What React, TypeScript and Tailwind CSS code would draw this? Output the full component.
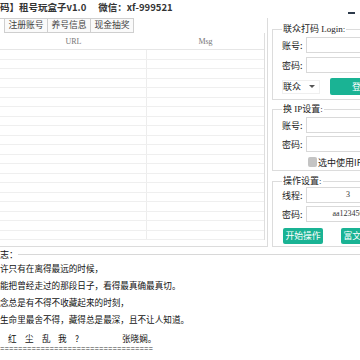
import React from "react";

const serif = "font-['Liberation_Serif','Noto_Sans_CJK_SC',serif]";

function Input({ value }: { value?: string }) {
  return (
    <div className={`w-[84px] h-[16px] border border-[#d9d9d9] bg-white flex items-center justify-center text-[8px] text-[#333] ${serif}`}>
      {value}
    </div>
  );
}

function Row({ label, value, mt }: { label: string; value?: string; mt: string }) {
  return (
    <div className={`flex items-center h-[16px] ${mt}`}>
      <span className="w-[24px] text-[9px] text-[#222] whitespace-nowrap">{label}</span>
      <Input value={value} />
    </div>
  );
}

export default function App() {
  const rows = Array.from({ length: 20 });
  return (
    <div className="w-[360px] h-[360px] overflow-hidden bg-white text-[#222] font-['Noto_Sans_CJK_SC',sans-serif] text-[9px] leading-none flex flex-col">
      {/* title bar */}
      <div className="h-[18px] shrink-0 flex items-start">
        <div className="pt-[2px] h-[13px] leading-[11px] font-bold text-[9.5px] text-[#333] whitespace-nowrap">码】租号玩盒子v1.0</div>
        <div className="ml-[12px] pt-[2px] h-[13px] leading-[11px] font-bold text-[9.5px] text-[#333] whitespace-nowrap">微信：xf-999521</div>
        <div className="ml-auto mr-[5px] mt-[11.5px] w-[7px] h-[2px] bg-[#2d3a4b]" />
      </div>

      {/* body */}
      <div className="h-[229px] shrink-0 flex">
        {/* left panel */}
        <div className="w-[268px] shrink-0 flex flex-col border-r border-b border-[#dcdcdc]">
          <div className="h-[15px] shrink-0 flex">
            <div className="w-[5px] h-full border-r border-t border-[#cfcfcf] bg-white" />
            {["注册账号", "养号信息", "现金抽奖"].map((t) => (
              <div key={t} className="w-[43px] h-full border-r border-t border-b border-[#cfcfcf] bg-[#fafafa] flex items-center justify-center text-[8.8px] text-[#444] whitespace-nowrap">
                {t}
              </div>
            ))}
          </div>
          <div className="mr-[2px] h-[207px] border-r border-b border-[#dedede] flex flex-col bg-white">
            <div className={`h-[17px] shrink-0 flex items-center border-b border-[#e6e6e6] text-[8px] text-[#777] ${serif}`}>
              <div className="w-[147px] text-center pt-[2px]">URL</div>
              <div className="flex-1 text-center pt-[2px]">Msg</div>
            </div>
            {rows.map((_, i) => (
              <div key={i} className="h-[9.5px] shrink-0 flex border-b-[1.5px] border-[#efefef]">
                <div className="w-[147px] border-r-[1.5px] border-[#ededed]" />
                <div className="flex-1" />
              </div>
            ))}
          </div>
        </div>

        {/* right column */}
        <div className="ml-[4px] flex-1 overflow-hidden flex flex-col">
          <fieldset className="mt-[6px] w-[120px] border border-[#dcdcdc] pl-[9px] pb-[4px]">
            <legend className={`px-[1px] h-[11px] leading-[11px] text-[9px] text-[#222] whitespace-nowrap ${serif}`}>联众打码 Login:</legend>
            <Row label="账号:" mt="mt-[2px]" />
            <Row label="密码:" mt="mt-[4px]" />
            <div className="mt-[5px] h-[17px] flex items-center">
              <div className="w-[38px] h-[14px] flex items-center justify-between border border-[#efefef] bg-white">
                <span className="text-[9px]">联众</span>
                <span className="mr-[4px] w-0 h-0 border-l-[3px] border-r-[3px] border-t-[3px] border-l-transparent border-r-transparent border-t-[#555]" />
              </div>
              <div className="ml-[10px] w-[62px] h-[17px] rounded-[2px] bg-[#1ab394] text-white flex items-center justify-center text-[9px] whitespace-nowrap">
                登录
              </div>
            </div>
          </fieldset>

          <fieldset className="mt-[4px] w-[120px] border border-[#dcdcdc] pl-[9px] pb-[3px]">
            <legend className={`px-[1px] h-[11px] leading-[11px] text-[9px] text-[#222] whitespace-nowrap ${serif}`}>换 IP设置:</legend>
            <Row label="账号:" mt="mt-[2px]" />
            <Row label="密码:" mt="mt-[3px]" />
            <div className="mt-[5px] h-[10px] flex items-center">
              <div className="ml-[26px] w-[9px] h-[10px] rounded-[2px] bg-[#c4c4c4]" />
              <span className="ml-[1px] text-[9px] whitespace-nowrap">选中使用IP</span>
            </div>
          </fieldset>

          <fieldset className="mt-[5px] w-[120px] border border-[#dcdcdc] pl-[9px] pb-[2px]">
            <legend className={`px-[1px] h-[11px] leading-[11px] text-[9px] text-[#222] whitespace-nowrap ${serif}`}>操作设置:</legend>
            <Row label="线程:" value="3" mt="mt-0" />
            <Row label="密码:" value="aa123456" mt="mt-[3px]" />
            <div className="mt-[6px] h-[16px] flex">
              <div className="ml-[1px] w-[40px] h-[16px] rounded-[2px] bg-[#1ab394] text-white flex items-center justify-center text-[8.8px] whitespace-nowrap">开始操作</div>
              <div className="ml-[18px] w-[40px] h-[16px] rounded-[2px] bg-[#1ab394] text-white flex items-center justify-center text-[8.8px] whitespace-nowrap">富文操作</div>
            </div>
          </fieldset>
        </div>
      </div>

      {/* log */}
      <div className="flex flex-col text-[8.6px] text-[#111]">
        <div className="mt-[2.5px] h-[10px] flex items-center">
          <span className="text-[9px] whitespace-nowrap">志：</span>
          <div className="flex-1 h-px bg-[#d8d8d8]" />
        </div>
        <div className="h-[17px] leading-[17px] whitespace-nowrap">许只有在离得最远的时候，</div>
        <div className="h-[17px] leading-[17px] whitespace-nowrap">能把曾经走过的那段日子，看得最真确最真切。</div>
        <div className="h-[17px] leading-[17px] whitespace-nowrap">念总是有不得不收藏起来的时刻，</div>
        <div className="h-[17px] leading-[17px] whitespace-nowrap">生命里最舍不得，藏得总是最深，且不让人知道。</div>
        <div className="mt-[3px] h-[15px] flex items-center whitespace-nowrap">
          <span className="ml-[8px] w-[17px]">红</span>
          <span className="w-[17px]">尘</span>
          <span className="w-[16px]">乱</span>
          <span className="w-[17px]">我</span>
          <span className="w-[47px]">?</span>
          <span>张晓娴。</span>
        </div>
        <div className="h-[6px] leading-[6px] text-[7.5px] font-['Liberation_Mono',monospace] text-[#333] whitespace-nowrap">
          ==================================
        </div>
      </div>
    </div>
  );
}
